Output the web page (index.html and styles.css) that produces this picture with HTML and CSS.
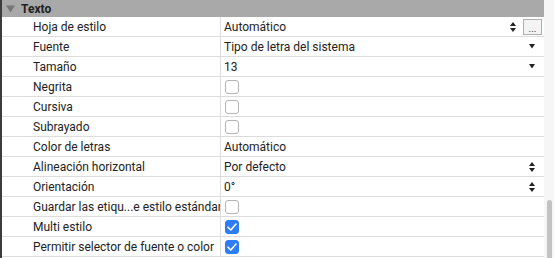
FILE: index.html
```html
<!DOCTYPE html>
<html lang="es">
<head>
<meta charset="utf-8">
<link rel="stylesheet" href="styles.css">
</head>
<body>
<div class="panel">
  <div class="table">
    <div class="header">
      <svg class="disclosure" width="9" height="8" viewBox="0 0 9 8"><path d="M0 0.5 H9 L4.5 7.5 Z" fill="#777"/></svg>
      <span class="title">Texto</span>
    </div>
    <div class="row">
      <div class="label">Hoja de estilo</div>
      <div class="value">
        <span class="text">Automático</span>
        <svg class="stepper" width="6" height="10" viewBox="0 0 6 10"><path d="M3 0 L6 4 H0 Z M0 6 H6 L3 10 Z" fill="#222"/></svg>
        <span class="dots">...</span>
      </div>
    </div>
    <div class="row">
      <div class="label">Fuente</div>
      <div class="value">
        <span class="text">Tipo de letra del sistema</span>
        <svg class="arrow" width="6" height="5" viewBox="0 0 6 5"><path d="M0 0 H6 L3 4.5 Z" fill="#222"/></svg>
      </div>
    </div>
    <div class="row">
      <div class="label">Tamaño</div>
      <div class="value">
        <span class="text">13</span>
        <svg class="arrow" width="6" height="5" viewBox="0 0 6 5"><path d="M0 0 H6 L3 4.5 Z" fill="#222"/></svg>
      </div>
    </div>
    <div class="row">
      <div class="label">Negrita</div>
      <div class="value"><span class="check"></span></div>
    </div>
    <div class="row">
      <div class="label">Cursiva</div>
      <div class="value"><span class="check"></span></div>
    </div>
    <div class="row">
      <div class="label">Subrayado</div>
      <div class="value"><span class="check"></span></div>
    </div>
    <div class="row">
      <div class="label">Color de letras</div>
      <div class="value"><span class="text">Automático</span></div>
    </div>
    <div class="row">
      <div class="label">Alineación horizontal</div>
      <div class="value">
        <span class="text">Por defecto</span>
        <svg class="stepper end" width="6" height="10" viewBox="0 0 6 10"><path d="M3 0 L6 4 H0 Z M0 6 H6 L3 10 Z" fill="#222"/></svg>
      </div>
    </div>
    <div class="row">
      <div class="label">Orientación</div>
      <div class="value">
        <span class="text">0°</span>
        <svg class="stepper end" width="6" height="10" viewBox="0 0 6 10"><path d="M3 0 L6 4 H0 Z M0 6 H6 L3 10 Z" fill="#222"/></svg>
      </div>
    </div>
    <div class="row">
      <div class="label">Guardar las etiqu...e estilo estándar</div>
      <div class="value"><span class="check"></span></div>
    </div>
    <div class="row">
      <div class="label">Multi estilo</div>
      <div class="value"><span class="check on"><svg width="10" height="8" viewBox="0 0 10 8"><path d="M1 4.2 L3.8 7 L9 1" fill="none" stroke="#fff" stroke-width="1.6" stroke-linecap="round" stroke-linejoin="round"/></svg></span></div>
    </div>
    <div class="row">
      <div class="label">Permitir selector de fuente o color</div>
      <div class="value"><span class="check on"><svg width="10" height="8" viewBox="0 0 10 8"><path d="M1 4.2 L3.8 7 L9 1" fill="none" stroke="#fff" stroke-width="1.6" stroke-linecap="round" stroke-linejoin="round"/></svg></span></div>
    </div>
  </div>
  <div class="scroll"><div class="thumb"></div></div>
</div>
</body>
</html>
```
FILE: styles.css
```css
html, body {
  margin: 0;
  padding: 0;
  background: #f6f6f6;
}
body {
  font-family: "Roboto", "Liberation Sans", sans-serif;
  font-size: 12px;
  color: #222;
  overflow: hidden;
}
.panel {
  display: flex;
  width: 554px;
  height: 258px;
}
.table {
  width: 542px;
  border-left: 2px solid #3c3c3c;
  background: #fff;
  display: flex;
  flex-direction: column;
}
.header {
  height: 17px;
  background: #a9a9a9;
  display: flex;
  align-items: center;
  padding-left: 4px;
  gap: 6px;
}
.title {
  font-weight: 700;
  color: #222;
  font-size: 12px;
}
.row {
  height: 19px;
  border-bottom: 1px solid #dcdcdc;
  display: grid;
  grid-template-columns: 219px 1fr;
}
.label {
  border-right: 1px solid #dcdcdc;
  padding-left: 31px;
  display: flex;
  align-items: center;
  white-space: nowrap;
  overflow: hidden;
}
.value {
  display: flex;
  align-items: center;
  padding-left: 3px;
  padding-right: 9px;
}
.text {
  flex: 1;
}
.arrow {
  margin-left: auto;
}
.stepper {
  margin-left: auto;
}
.dots {
  margin-left: 7px;
  width: 19px;
  height: 16px;
  border: 1px solid #aeaeae;
  box-sizing: border-box;
  background: #f4f4f4;
  font-size: 10px;
  color: #444;
  display: flex;
  align-items: flex-end;
  justify-content: center;
  line-height: 11px;
  margin-right: -7px;
}
.check {
  width: 14px;
  height: 14px;
  box-sizing: border-box;
  border: 1px solid #b4b4b4;
  border-radius: 3px;
  margin-left: 1px;
  background: #fff;
  display: flex;
  align-items: center;
  justify-content: center;
}
.check.on {
  background: #2f7df6;
  border-color: #2f7df6;
}
.scroll {
  flex: 1;
  background: #f6f6f6;
  display: flex;
  flex-direction: column;
  justify-content: flex-end;
  align-items: center;
}
.thumb {
  width: 5px;
  height: 58px;
  border-radius: 3px 3px 0 0;
  background: #c2c2c2;
}
```
